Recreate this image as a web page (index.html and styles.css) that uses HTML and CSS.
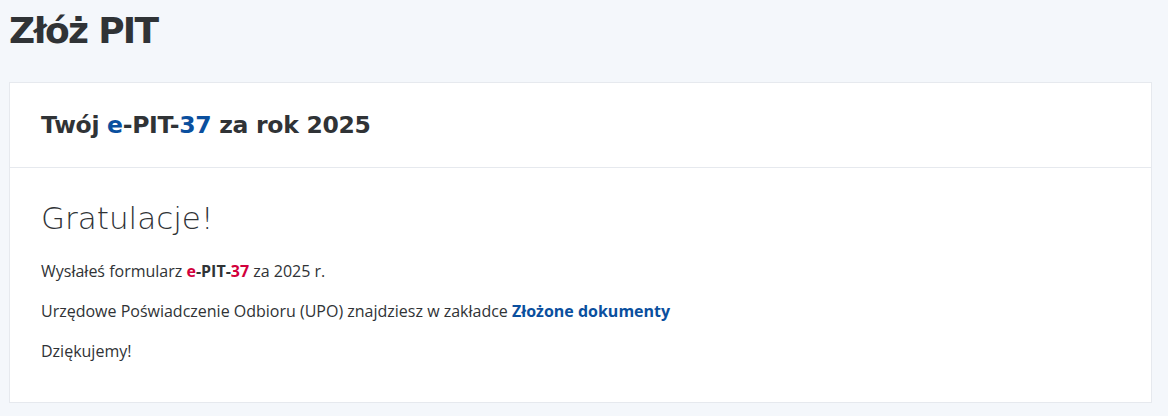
FILE: index.html
```html
<!DOCTYPE html>
<html lang="pl">
<head>
    <meta charset="UTF-8">
    <meta name="viewport" content="width=device-width, initial-scale=1.0">
    <title>Złóż PIT</title>
    <link rel="stylesheet" href="styles.css">
</head>
<body>
    <div class="page">
        <h1 class="page-title">Złóż PIT</h1>

        <div class="card">
            <div class="card-header">
                <h2>Twój <span class="blue">e</span>-PIT-<span class="blue">37</span> za rok 2025</h2>
            </div>
            <div class="card-body">
                <h3 class="congrats">Gratulacje!</h3>
                <p>Wysłałeś formularz <strong class="form-name"><span class="red">e</span>-PIT-<span class="red">37</span></strong> za 2025 r.</p>
                <p>Urzędowe Poświadczenie Odbioru (UPO) znajdziesz w zakładce <a href="#" class="link">Złożone dokumenty</a></p>
                <p>Dziękujemy!</p>
            </div>
        </div>
    </div>
</body>
</html>
```

FILE: styles.css
```css
* {
    margin: 0;
    padding: 0;
    box-sizing: border-box;
}

:root {
    --text: #303336;
    --blue: #0a4f9e;
    --red: #d2003c;
    --bg: #f4f7fb;
    --border: #e6e9ee;
}

body {
    background: var(--bg);
    color: var(--text);
    font-family: 'Open Sans', sans-serif;
}

.page {
    padding: 11px 16px 0 9px;
}

.page-title {
    font-family: 'DejaVu Sans', sans-serif;
    font-weight: bold;
    font-size: 36px;
    line-height: 40px;
    letter-spacing: -1.7px;
    margin-bottom: 31px;
}

.card {
    background: white;
    border: 1px solid var(--border);
}

.card-header {
    padding: 0 31px;
    height: 85px;
    display: flex;
    align-items: center;
    border-bottom: 1px solid var(--border);
}

.card-header h2 {
    font-family: 'DejaVu Sans', sans-serif;
    font-weight: bold;
    font-size: 23.5px;
    letter-spacing: -0.3px;
}

.blue {
    color: var(--blue);
}

.red {
    color: var(--red);
}

.card-body {
    padding: 30px 31px 40px;
}

.congrats {
    font-family: 'DejaVu Sans', sans-serif;
    font-weight: 200;
    font-size: 31px;
    line-height: 40px;
    margin-bottom: 22px;
}

.card-body p {
    font-size: 16px;
    line-height: 22px;
    margin-bottom: 18px;
}

.card-body p:last-child {
    margin-bottom: 0;
}

.form-name {
    font-weight: bold;
}

.link {
    color: var(--blue);
    font-weight: bold;
    text-decoration: none;
}
```
